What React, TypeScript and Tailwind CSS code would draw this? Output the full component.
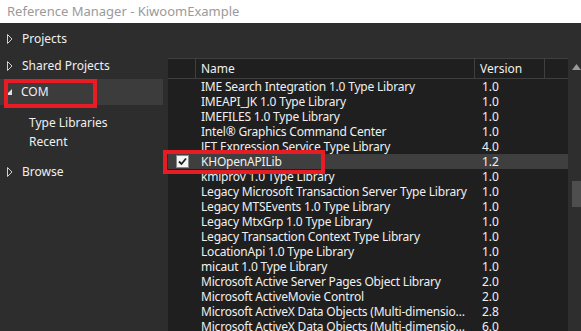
import React from "react";

const rows: [string, string][] = [
  ["IME Search Integration 1.0 Type Library", "1.0"],
  ["IMEAPI_JK 1.0 Type Library", "1.0"],
  ["IMEFILES 1.0 Type Library", "1.0"],
  ["Intel® Graphics Command Center", "1.0"],
  ["JET Expression Service Type Library", "4.0"],
  ["KHOpenAPILib", "1.2"],
  ["kmiprov 1.0 Type Library", "1.0"],
  ["Legacy Microsoft Transaction Server Type Library", "1.0"],
  ["Legacy MTSEvents 1.0 Type Library", "1.0"],
  ["Legacy MtxGrp 1.0 Type Library", "1.0"],
  ["Legacy Transaction Context Type Library", "1.0"],
  ["LocationApi 1.0 Type Library", "1.0"],
  ["micaut 1.0 Type Library", "1.0"],
  ["Microsoft Active Server Pages Object Library", "2.0"],
  ["Microsoft ActiveMovie Control", "2.0"],
  ["Microsoft ActiveX Data Objects (Multi-dimensional) 2.8 Library", "2.8"],
  ["Microsoft ActiveX Data Objects (Multi-dimensional) 6.0 Library", "6.0"],
];

function Arrow({ open }: { open?: boolean }) {
  if (open) {
    return (
      <svg width="8" height="8" viewBox="0 0 8 8" className="shrink-0">
        <path d="M7 1 L7 7 L1 7 Z" fill="#e0e0e0" />
      </svg>
    );
  }
  return (
    <svg width="8" height="10" viewBox="0 0 8 10" className="shrink-0">
      <path d="M1.5 0.5 L6 5 L1.5 9.5 Z" fill="none" stroke="#d0d0d0" strokeWidth="1" />
    </svg>
  );
}

export default function App() {
  return (
    <div
      className="w-[581px] h-[331px] overflow-hidden flex flex-col bg-[#2d2d2d] relative"
      style={{ fontFamily: '"Noto Sans", "Segoe UI", sans-serif' }}
    >
      {/* title bar */}
      <div className="h-[23px] shrink-0 bg-white flex items-center pl-[7px] text-[13px] text-[#9a9a9a]">
        Reference Manager - KiwoomExample
      </div>

      <div className="flex flex-1 min-h-0">
        {/* sidebar */}
        <div className="w-[168px] shrink-0 flex flex-col pt-[2px] text-[12px] text-[#f0f0f0]">
          <div className="h-[27px] flex items-center gap-[8px] pl-[6px]">
            <Arrow />
            <span>Projects</span>
          </div>
          <div className="h-[27px] flex items-center gap-[8px] pl-[6px]">
            <Arrow />
            <span>Shared Projects</span>
          </div>
          <div className="h-[26px] w-[163px] bg-[#3c3c3c] flex items-center gap-[8px] pl-[5px]">
            <Arrow open />
            <span>COM</span>
          </div>
          <div className="pt-[8px] pl-[29px] flex flex-col">
            <span className="h-[19px] leading-[19px]">Type Libraries</span>
            <span className="h-[19px] leading-[19px]">Recent</span>
          </div>
          <div className="mt-[7px] h-[27px] flex items-center gap-[8px] pl-[6px]">
            <Arrow />
            <span>Browse</span>
          </div>
        </div>

        {/* list */}
        <div className="flex-1 flex flex-col pt-[35px] min-w-0">
          <div className="flex flex-1 min-h-0">
            <div className="w-[400px] bg-[#1f1f1f] text-[12px] tracking-[-0.2px] text-[#f0f0f0] flex flex-col">
              <div className="h-[21px] shrink-0 flex border-y border-[#3f3f3f] tracking-normal">
                <div className="w-[28px] border-r border-[#3f3f3f]" />
                <div className="w-[279px] border-r border-[#3f3f3f] pl-[5px] leading-[19px]">Name</div>
                <div className="w-[70px] border-r border-[#3f3f3f] pl-[5px] leading-[19px]">Version</div>
              </div>
              {rows.map(([name, ver]) => {
                const checked = name === "KHOpenAPILib";
                return (
                  <div
                    key={name + ver}
                    className={
                      "h-[15px] shrink-0 flex items-center leading-[15px] " + (checked ? "bg-[#3f3f3f]" : "")
                    }
                  >
                    <div className="w-[28px] flex justify-center">
                      {checked && (
                        <div className="w-[13px] h-[13px] bg-[#f6f6f6] border border-[#8a8a8a] flex items-center justify-center">
                          <svg width="9" height="9" viewBox="0 0 9 9">
                            <path d="M1 4.5 L3.5 7 L8 1.5" fill="none" stroke="#1e1e1e" strokeWidth="1.8" />
                          </svg>
                        </div>
                      )}
                    </div>
                    <div className="w-[280px] pl-[5px] pr-[5px] truncate">{name}</div>
                    <div className="pl-[6px] tracking-normal">{ver}</div>
                  </div>
                );
              })}
            </div>
            {/* scrollbar */}
            <div className="w-[13px] bg-[#2e2e2e] flex flex-col items-end">
              <svg width="9" height="6" viewBox="0 0 9 6" className="mt-[6px]">
                <path d="M4.5 0 L9 6 L0 6 Z" fill="#9a9a9a" />
              </svg>
              <div className="mt-[111px] w-[9px] h-[26px] bg-[#4e4e4e]" />
            </div>
          </div>
        </div>
      </div>

      {/* red highlight boxes */}
      <div className="absolute left-[4px] top-[79px] w-[93px] h-[29px] border-[4px] border-[#e81c24]" />
      <div className="absolute left-[163px] top-[150px] w-[162px] h-[24px] border-[4px] border-[#e81c24]" />
    </div>
  );
}
